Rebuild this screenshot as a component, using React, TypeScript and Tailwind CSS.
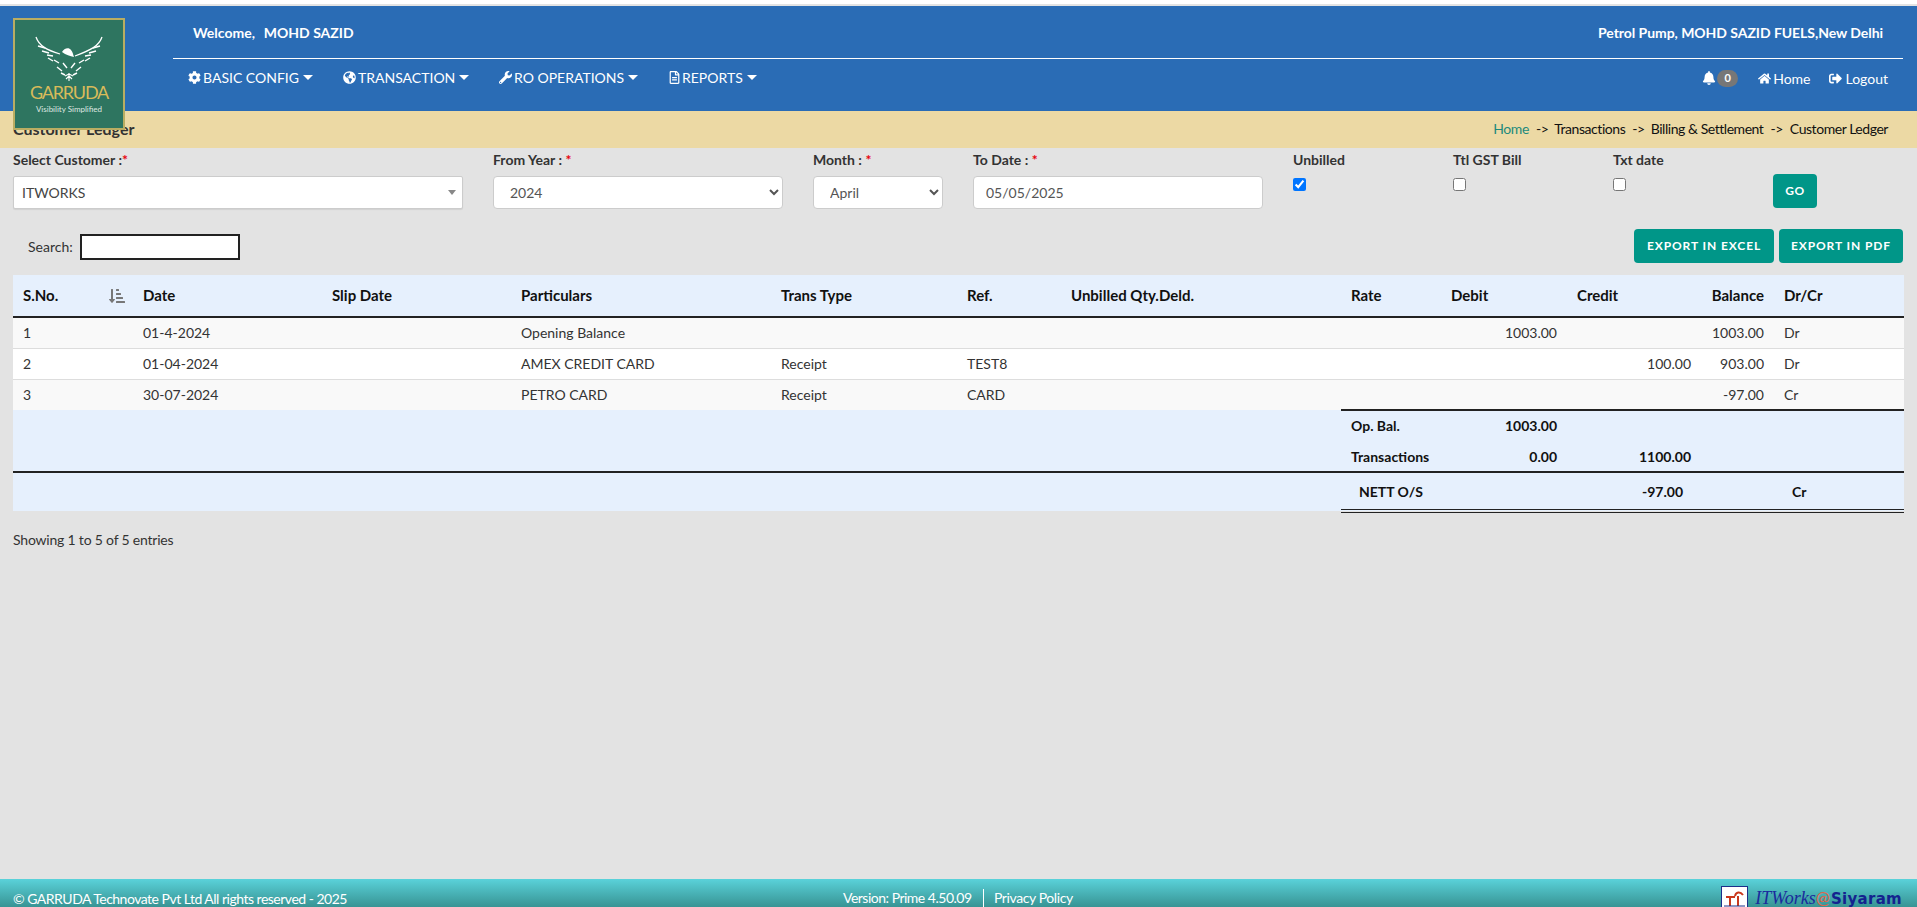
import { FaBell, FaCog, FaGlobeAmericas, FaHome, FaRegFileAlt, FaSignOutAlt, FaSortAmountDownAlt, FaWrench } from 'react-icons/fa';

const rows = [
  { sno: '1', date: '01-4-2024', part: 'Opening Balance', type: '', ref: '', debit: '1003.00', credit: '', bal: '1003.00', dc: 'Dr' },
  { sno: '2', date: '01-04-2024', part: 'AMEX CREDIT CARD', type: 'Receipt', ref: 'TEST8', debit: '', credit: '100.00', bal: '903.00', dc: 'Dr' },
  { sno: '3', date: '30-07-2024', part: 'PETRO CARD', type: 'Receipt', ref: 'CARD', debit: '', credit: '', bal: '-97.00', dc: 'Cr' },
];

function Caret() {
  return <span className="ml-[4px] inline-block h-0 w-0 border-x-[5px] border-t-[5px] border-x-transparent border-t-white" />;
}

function Req() {
  return <span className="text-red-600">*</span>;
}

function Logo() {
  return (
    <div className="absolute left-[13px] top-[18px] z-10 flex h-[112px] w-[112px] flex-col items-center border-2 border-[#b9ad62] bg-[#2e7560]">
      <svg width="68" height="48" viewBox="34 34 68 48" className="mt-[15px]" fill="none" stroke="#fff">
        <path d="M35 36c3 9 11 13 24 17" strokeWidth="1.3" />
        <path d="M101 36c-3 9-11 13-27 19" strokeWidth="1.3" />
        <path d="M61 51c2-4 7-5 9-2 2 2 2 5 3 7-4-1-8-2-12-5z" fill="#fff" stroke="none" />
        <path d="M37 45l7 2M41 50l7 2M46 54l6 1M52 60l-5-3M58 62l-5-3M99 45l-7 2M95 50l-7 2M90 54l-6 1M84 60l5-3M78 62l5-3" strokeWidth="1.4" />
        <path d="M56 66l5 4M62 62l4 5M80 66l-5 4M74 62l-4 5M60 72l4 2M76 72l-4 2" strokeWidth="1.4" />
        <path d="M68 80v-8M68 73l-4 2M68 73l4 2M68 75l-3 3M68 75l3 3" strokeWidth="1.1" />
      </svg>
      <div className="-mt-[2px] text-[18px] leading-[22px] tracking-[-1.2px] text-[#d9bb5a]">GARRUDA</div>
      <div className="mt-[1px] text-[8px] leading-[10px] text-[#dfe8e2]">Visibility Simplified</div>
    </div>
  );
}

function FooterLogo() {
  return (
    <div className="flex items-start tracking-normal">
      <div className="mt-[7px] h-[24px] w-[27px] border border-[#1c2f8a] bg-white">
        <svg width="25" height="22" viewBox="0 0 25 22" fill="none" stroke="#c9381c" strokeWidth="2">
          <path d="M4 10h9M8 10v9M16 9v10M13 9c1-4 5-5 8-1" />
          <path d="M2 19h21" stroke="#1c2f8a" strokeWidth="1" />
        </svg>
      </div>
      <span className="ml-[7px] mt-[8px] text-[18px] italic leading-[22px] text-[#1a2a9c] [font-family:'Liberation_Serif',serif]">ITWorks</span>
      <span className="mt-[8px] text-[17px] leading-[22px] text-[#e0644a]">@</span>
      <span className="ml-[1px] mt-[9px] text-[15px] font-bold leading-[22px] tracking-[0.3px] text-[#14238f] [font-family:'DejaVu_Sans',sans-serif]">Siyaram</span>
    </div>
  );
}

export default function App() {
  return (
    <div className="relative flex h-[907px] flex-col overflow-hidden bg-[#e3e3e3] text-[14px] text-[#333] [font-family:Lato,sans-serif]">
      <div className="h-[4px] bg-white" />
      <div className="h-[2px] bg-[#e3e3e3]" />
      <Logo />

      <header className="h-[105px] bg-[#2a6cb5] pl-[173px] pr-[14px] text-white">
        <div className="flex h-[53px] items-center justify-between border-b border-white pl-[20px] pr-[20px] pt-[1px] text-[14px] font-bold">
          <span>Welcome,&nbsp;&nbsp;<span className="ml-[2px]">MOHD SAZID</span></span>
          <span className="tracking-[-0.05px]">Petrol Pump, MOHD SAZID FUELS,New Delhi</span>
        </div>
        <div className="flex h-[38px] items-center justify-between pl-[15px] pr-[15px] text-[14px]">
          <nav className="-mt-[2px] flex items-center">
            <a className="flex w-[155px] items-center"><FaCog className="mr-[2px] text-[13px]" />BASIC CONFIG<Caret /></a>
            <a className="flex w-[156px] items-center"><FaGlobeAmericas className="mr-[2px] text-[13px]" />TRANSACTION<Caret /></a>
            <a className="flex w-[169px] items-center"><FaWrench className="mr-[2px] text-[13px]" />RO OPERATIONS<Caret /></a>
            <a className="flex items-center"><FaRegFileAlt className="mr-[1px] text-[13px]" />REPORTS<Caret /></a>
          </nav>
          <div className="flex items-center">
            <FaBell className="text-[14px]" />
            <span className="ml-[1px] flex h-[17px] w-[21px] items-center justify-center rounded-full bg-[#777] text-[11px] font-bold">0</span>
            <a className="ml-[20px] flex items-center"><FaHome className="mr-[2px] text-[13px]" />Home</a>
            <a className="ml-[19px] flex items-center"><FaSignOutAlt className="mr-[3px] text-[13px]" />Logout</a>
          </div>
        </div>
      </header>

      <div className="flex h-[37px] items-center justify-between bg-[#ecd9a4] pb-[2px] pl-[13px] pr-[29px]">
        <h1 className="text-[16px] font-bold text-[#333]">Customer Ledger</h1>
        <div className="flex text-[14px] tracking-[-0.45px] text-[#111]">
          <a className="text-[#1d8a7c]">Home</a>
          <span className="ml-[7px]">-&gt;</span>
          <span className="ml-[6px]">Transactions</span>
          <span className="ml-[7px]">-&gt;</span>
          <span className="ml-[6px]">Billing &amp; Settlement</span>
          <span className="ml-[7px]">-&gt;</span>
          <span className="ml-[7px]">Customer Ledger</span>
        </div>
      </div>

      <main className="flex-1 px-[13px]">
        <form className="grid h-[81px] grid-cols-[480px_320px_160px_320px_160px_160px_160px_1fr] pt-[2px]">
          <div>
            <label className="block h-[26px] font-bold leading-[19px]">Select Customer :<Req /></label>
            <div className="flex h-[33px] w-[450px] items-center justify-between rounded-[2px] border border-[#ccc] bg-white pl-[8px] pr-[6px] text-[#444] shadow-[0_1px_1px_rgba(0,0,0,0.08)]">
              ITWORKS
              <span className="h-0 w-0 border-x-[4px] border-t-[5px] border-x-transparent border-t-[#888]" />
            </div>
          </div>
          <div>
            <label className="block h-[26px] font-bold leading-[19px]">From Year : <Req /></label>
            <select defaultValue="2024" className="h-[33px] w-[290px] rounded-[4px] border border-[#ccc] bg-white px-[12px] text-[#555]">
              <option>2024</option>
            </select>
          </div>
          <div>
            <label className="block h-[26px] font-bold leading-[19px]">Month : <Req /></label>
            <select defaultValue="April" className="h-[33px] w-[130px] rounded-[4px] border border-[#ccc] bg-white px-[12px] text-[#555]">
              <option>April</option>
            </select>
          </div>
          <div>
            <label className="block h-[26px] font-bold leading-[19px]">To Date : <Req /></label>
            <input readOnly value="05/05/2025" className="h-[33px] w-[290px] rounded-[4px] border border-[#ccc] bg-white px-[12px] text-[#555]" />
          </div>
          <div>
            <label className="block h-[28px] font-bold leading-[19px]">Unbilled</label>
            <input type="checkbox" defaultChecked className="block h-[13px] w-[13px]" />
          </div>
          <div>
            <label className="block h-[28px] font-bold leading-[19px]">Ttl GST Bill</label>
            <input type="checkbox" className="block h-[13px] w-[13px]" />
          </div>
          <div>
            <label className="block h-[28px] font-bold leading-[19px]">Txt date</label>
            <input type="checkbox" className="block h-[13px] w-[13px]" />
          </div>
          <div className="pt-[24px]">
            <button type="button" className="h-[34px] w-[44px] rounded-[4px] bg-[#009688] text-[12px] font-bold tracking-[0.5px] text-white">GO</button>
          </div>
        </form>

        <div className="flex h-[46px] items-start justify-between">
          <div className="flex items-center pl-[15px] pt-[5px]">
            <label className="-mt-[1px]">Search:</label>
            <input className="ml-[7px] h-[26px] w-[160px] border-2 border-[#222] bg-white" />
          </div>
          <div className="flex gap-[5px] pr-[1px]">
            <button type="button" className="h-[34px] w-[140px] rounded-[4px] bg-[#009688] text-[12px] font-bold tracking-[0.9px] text-white">EXPORT IN EXCEL</button>
            <button type="button" className="h-[34px] w-[124px] rounded-[4px] bg-[#009688] text-[12px] font-bold tracking-[0.9px] text-white">EXPORT IN PDF</button>
          </div>
        </div>

        <table className="w-[1891px] table-fixed border-collapse text-left">
          <colgroup>
            <col className="w-[120px]" />
            <col className="w-[189px]" />
            <col className="w-[189px]" />
            <col className="w-[260px]" />
            <col className="w-[186px]" />
            <col className="w-[104px]" />
            <col className="w-[280px]" />
            <col className="w-[100px]" />
            <col className="w-[126px]" />
            <col className="w-[134px]" />
            <col className="w-[73px]" />
            <col className="w-[130px]" />
          </colgroup>
          <thead className="bg-[#e6f0fd] text-[15px] font-bold text-[#111]">
            <tr className="h-[42px] border-b-2 border-[#222]">
              <th className="px-[10px] font-bold">
                <div className="flex items-center justify-between">
                  S.No.
                  <FaSortAmountDownAlt className="mr-[-2px] text-[16px] text-[#777]" />
                </div>
              </th>
              <th className="px-[10px] font-bold">Date</th>
              <th className="px-[10px] font-bold">Slip Date</th>
              <th className="px-[10px] font-bold">Particulars</th>
              <th className="px-[10px] font-bold">Trans Type</th>
              <th className="px-[10px] font-bold">Ref.</th>
              <th className="px-[10px] font-bold">Unbilled Qty.Deld.</th>
              <th className="px-[10px] font-bold">Rate</th>
              <th className="px-[10px] font-bold">Debit</th>
              <th className="px-[10px] font-bold">Credit</th>
              <th className="px-[10px] text-right font-bold">Balance</th>
              <th className="px-[10px] font-bold">Dr/Cr</th>
            </tr>
          </thead>
          <tbody>
            {rows.map((r, i) => (
              <tr key={r.sno} className={`h-[31px] ${i % 2 === 0 ? 'bg-[#f9f9f9]' : 'bg-white'} ${i < 2 ? 'border-b border-[#ddd]' : ''}`}>
                <td className="px-[10px]">{r.sno}</td>
                <td className="px-[10px]">{r.date}</td>
                <td className="px-[10px]" />
                <td className="px-[10px]">{r.part}</td>
                <td className="px-[10px]">{r.type}</td>
                <td className="px-[10px]">{r.ref}</td>
                <td className="px-[10px]" />
                <td className="px-[10px]" />
                <td className="px-[10px] text-right">{r.debit}</td>
                <td className="px-[10px] text-right">{r.credit}</td>
                <td className="px-[10px] text-right">{r.bal}</td>
                <td className="px-[10px]">{r.dc}</td>
              </tr>
            ))}
          </tbody>
          <tfoot className="bg-[#e6f0fd] font-bold text-[#111]">
            <tr className="h-[31px]">
              <td colSpan={7} />
              <td className="border-t-2 border-[#222] px-[10px] pb-[2px]">Op. Bal.</td>
              <td className="border-t-2 border-[#222] px-[10px] pb-[2px] text-right">1003.00</td>
              <td colSpan={3} className="border-t-2 border-[#222]" />
            </tr>
            <tr className="h-[31px] border-b-2 border-[#222]">
              <td colSpan={7} />
              <td className="whitespace-nowrap px-[10px]">Transactions</td>
              <td className="px-[10px] text-right">0.00</td>
              <td className="px-[10px] text-right">1100.00</td>
              <td colSpan={2} />
            </tr>
            <tr className="h-[39px]">
              <td colSpan={7} />
              <td className="border-b-[4px] border-double border-[#222] pl-[18px]">NETT O/S</td>
              <td className="border-b-[4px] border-double border-[#222]" />
              <td className="border-b-[4px] border-double border-[#222] pr-[18px] text-right">-97.00</td>
              <td className="border-b-[4px] border-double border-[#222]" />
              <td className="border-b-[4px] border-double border-[#222] pl-[18px]">Cr</td>
            </tr>
          </tfoot>
        </table>

        <div className="pt-[16px] tracking-[-0.2px]">Showing 1 to 5 of 5 entries</div>
      </main>

      <footer className="flex h-[28px] items-start justify-between bg-gradient-to-b from-[#5ad2da] to-[#389494] pl-[13px] pr-[15px] text-[14px] tracking-[-0.5px] text-white">
        <span className="w-[830px] pt-[10px] leading-[19px]">© GARRUDA Technovate Pvt Ltd All rights reserved - 2025</span>
        <div className="flex flex-1 pt-[10px] leading-[18px]">
          <span className="w-[140px]">Version: Prime 4.50.09</span>
          <span className="border-l border-white pl-[10px] tracking-[-0.4px]">Privacy Policy</span>
        </div>
        <FooterLogo />
      </footer>
    </div>
  );
}
